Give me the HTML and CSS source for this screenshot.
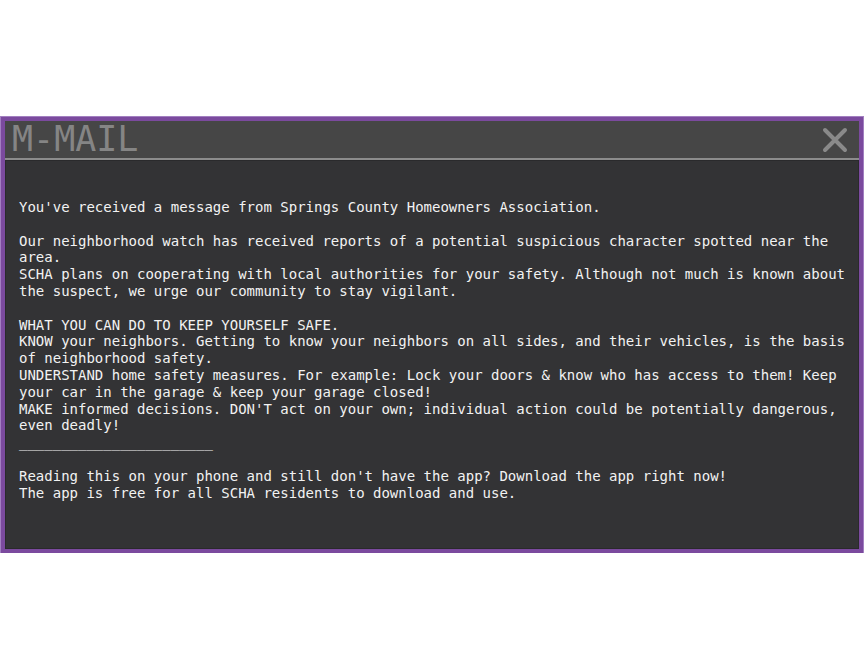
FILE: index.html
```html
<!DOCTYPE html>
<html>
<head>
<meta charset="utf-8">
<link rel="stylesheet" href="styles.css">
</head>
<body>
<div class="window">
  <div class="titlebar">
    <span class="title">M-MAIL</span>
    <svg class="close" width="26" height="26" viewBox="0 0 26 26"><path d="M3 3 L23 23 M23 3 L3 23" stroke="#8a8a8a" stroke-width="4" stroke-linecap="round" fill="none"/></svg>
  </div>
  <div class="content">
<p>You've received a message from Springs County Homeowners Association.</p>
<p>Our neighborhood watch has received reports of a potential suspicious character spotted near the area.<br>SCHA plans on cooperating with local authorities for your safety. Although not much is known about the suspect, we urge our community to stay vigilant.</p>
<p>WHAT YOU CAN DO TO KEEP YOURSELF SAFE.<br>KNOW your neighbors. Getting to know your neighbors on all sides, and their vehicles, is the basis of neighborhood safety.<br>UNDERSTAND home safety measures. For example: Lock your doors &amp; know who has access to them! Keep your car in the garage &amp; keep your garage closed!<br>MAKE informed decisions. DON'T act on your own; individual action could be potentially dangerous, even deadly!<br>_______________________</p>
<p>Reading this on your phone and still don't have the app? Download the app right now!<br>The app is free for all SCHA residents to download and use.</p>
  </div>
</div>
</body>
</html>
```
FILE: styles.css
```css
html, body {
  margin: 0;
  padding: 0;
  background: #ffffff;
}
body {
  padding-top: 117px;
  padding-left: 1px;
  padding-right: 1px;
}
.window {
  height: 428px;
  border: 4px solid #7b4a9e;
  outline: 1px solid #a27fc0;
  background: #333335;
  display: flex;
  flex-direction: column;
}
.titlebar {
  height: 37px;
  background: #464646;
  border-bottom: 2px solid #8c8c8c;
  display: flex;
  align-items: center;
  justify-content: space-between;
  padding: 0 11px 0 7px;
}
.title {
  font-family: "DejaVu Sans Mono", monospace;
  font-size: 35px;
  line-height: 37px;
  color: #858585;
  letter-spacing: 0;
}
.close {
  display: block;
  margin-top: 1px;
}
.content {
  flex: 1;
  padding: 39px 12px 0 14px;
  font-family: "DejaVu Sans Mono", monospace;
  font-size: 14px;
  line-height: 16.8px;
  color: #f2f2f2;
  box-shadow: inset 0 0 0 1px #2a2a2c;
}
.content p {
  margin: 0 0 16.8px 0;
}
```
